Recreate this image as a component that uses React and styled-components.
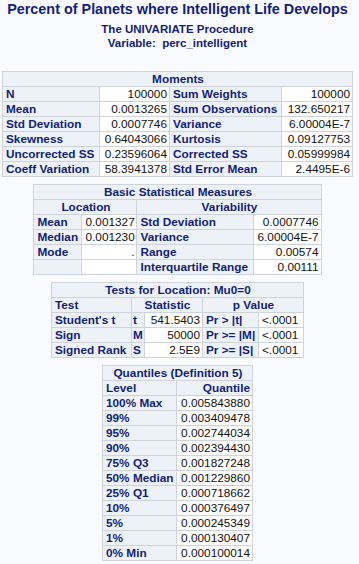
import React from 'react';
import styled, { createGlobalStyle } from 'styled-components';

const GlobalStyle = createGlobalStyle`
    html, body {
        margin: 0;
        padding: 0;
        background: #fafbfe;
    }
    body {
        font-family: "Liberation Sans", Arial, sans-serif;
        color: #112277;
    }
`;

const Page = styled.div`
    width: 355px;
    display: flex;
    flex-direction: column;
    align-items: center;
`;

const Title = styled.div`
    font-size: 14.4px;
    font-weight: bold;
    line-height: 18px;
    white-space: nowrap;
`;

const ProcTitle = styled.div`
    font-size: 11.5px;
    font-weight: bold;
    line-height: 14px;
    white-space: pre;
    margin-top: ${({ $first }) => ($first ? '4px' : '0')};
`;

const Stack = styled.div`
    margin-top: 21px;
    display: flex;
    flex-direction: column;
    align-items: center;
    gap: 7px;
`;

const Table = styled.table`
    border-collapse: collapse;
    border: 1px solid #c1c1c1;
    table-layout: fixed;
    width: ${({ $w }) => $w}px;
    font-size: 11.8px;
`;

const Cell = styled.td`
    height: 14px;
    padding: 0 2px 0 3px;
    border: 1px solid #cfd3db;
    line-height: 13px;
    white-space: nowrap;
    overflow: hidden;
    background: #ffffff;
    color: #111;
    text-align: ${({ $align }) => $align || 'right'};
`;

const Head = styled.th`
    height: 14px;
    padding: ${({ $tight }) => ($tight ? '0 1px' : '0 2px 0 3px')};
    border: 1px solid #cfd3db;
    line-height: 13px;
    white-space: nowrap;
    overflow: hidden;
    background: #edf2f9;
    color: #112277;
    font-weight: bold;
    text-align: ${({ $align }) => $align || 'left'};
`;

const Cols = ({ widths }) => (
    <colgroup>
        {widths.map((w, i) => <col key={i} style={{ width: w }} />)}
    </colgroup>
);

const moments = [
    ['N', '100000', 'Sum Weights', '100000'],
    ['Mean', '0.0013265', 'Sum Observations', '132.650217'],
    ['Std Deviation', '0.0007746', 'Variance', '6.00004E-7'],
    ['Skewness', '0.64043066', 'Kurtosis', '0.09127753'],
    ['Uncorrected SS', '0.23596064', 'Corrected SS', '0.05999984'],
    ['Coeff Variation', '58.3941378', 'Std Error Mean', '2.4495E-6'],
];

const basic = [
    ['Mean', '0.001327', 'Std Deviation', '0.0007746'],
    ['Median', '0.001230', 'Variance', '6.00004E-7'],
    ['Mode', '.', 'Range', '0.00574'],
    ['', '', 'Interquartile Range', '0.00111'],
];

const tests = [
    ["Student's t", 't', '541.5403', 'Pr > |t|', '<.0001'],
    ['Sign', 'M', '50000', 'Pr >= |M|', '<.0001'],
    ['Signed Rank', 'S', '2.5E9', 'Pr >= |S|', '<.0001'],
];

const quantiles = [
    ['100% Max', '0.005843880'],
    ['99%', '0.003409478'],
    ['95%', '0.002744034'],
    ['90%', '0.002394430'],
    ['75% Q3', '0.001827248'],
    ['50% Median', '0.001229860'],
    ['25% Q1', '0.000718662'],
    ['10%', '0.000376497'],
    ['5%', '0.000245349'],
    ['1%', '0.000130407'],
    ['0% Min', '0.000100014'],
];

const MomentsTable = () => (
    <Table $w={351}>
        <Cols widths={[97, 70, 112, 71]} />
        <thead>
            <tr><Head colSpan={4} $align="center">Moments</Head></tr>
        </thead>
        <tbody>
            {moments.map((r) => (
                <tr key={r[0]}>
                    <Head>{r[0]}</Head>
                    <Cell>{r[1]}</Cell>
                    <Head>{r[2]}</Head>
                    <Cell>{r[3]}</Cell>
                </tr>
            ))}
        </tbody>
    </Table>
);

const BasicTable = () => (
    <Table $w={288}>
        <Cols widths={[48, 55, 117, 67]} />
        <thead>
            <tr><Head colSpan={4} $align="center">Basic Statistical Measures</Head></tr>
            <tr>
                <Head colSpan={2} $align="center">Location</Head>
                <Head colSpan={2} $align="center">Variability</Head>
            </tr>
        </thead>
        <tbody>
            {basic.map((r, i) => (
                <tr key={i}>
                    <Head>{r[0]}</Head>
                    <Cell>{r[1]}</Cell>
                    <Head>{r[2]}</Head>
                    <Cell>{r[3]}</Cell>
                </tr>
            ))}
        </tbody>
    </Table>
);

const TestsTable = () => (
    <Table $w={252}>
        <Cols widths={[80, 13, 58, 56, 45]} />
        <thead>
            <tr><Head colSpan={5} $align="center">Tests for Location: Mu0=0</Head></tr>
            <tr>
                <Head>Test</Head>
                <Head colSpan={2} $align="center">Statistic</Head>
                <Head colSpan={2} $align="center">p Value</Head>
            </tr>
        </thead>
        <tbody>
            {tests.map((r) => (
                <tr key={r[0]}>
                    <Head>{r[0]}</Head>
                    <Head $tight>{r[1]}</Head>
                    <Cell>{r[2]}</Cell>
                    <Head>{r[3]}</Head>
                    <Cell $align="left">{r[4]}</Cell>
                </tr>
            ))}
        </tbody>
    </Table>
);

const QuantilesTable = () => (
    <Table $w={150}>
        <Cols widths={[74, 76]} />
        <thead>
            <tr><Head colSpan={2} $align="center">Quantiles (Definition 5)</Head></tr>
            <tr>
                <Head>Level</Head>
                <Head $align="right">Quantile</Head>
            </tr>
        </thead>
        <tbody>
            {quantiles.map((r) => (
                <tr key={r[0]}>
                    <Head>{r[0]}</Head>
                    <Cell>{r[1]}</Cell>
                </tr>
            ))}
        </tbody>
    </Table>
);

export default function App() {
    return (
        <Page>
            <GlobalStyle />
            <Title>Percent of Planets where Intelligent Life Develops</Title>
            <ProcTitle $first>The UNIVARIATE Procedure</ProcTitle>
            <ProcTitle>{'Variable:  perc_intelligent'}</ProcTitle>
            <Stack>
                <MomentsTable />
                <BasicTable />
                <TestsTable />
                <QuantilesTable />
            </Stack>
        </Page>
    );
}
